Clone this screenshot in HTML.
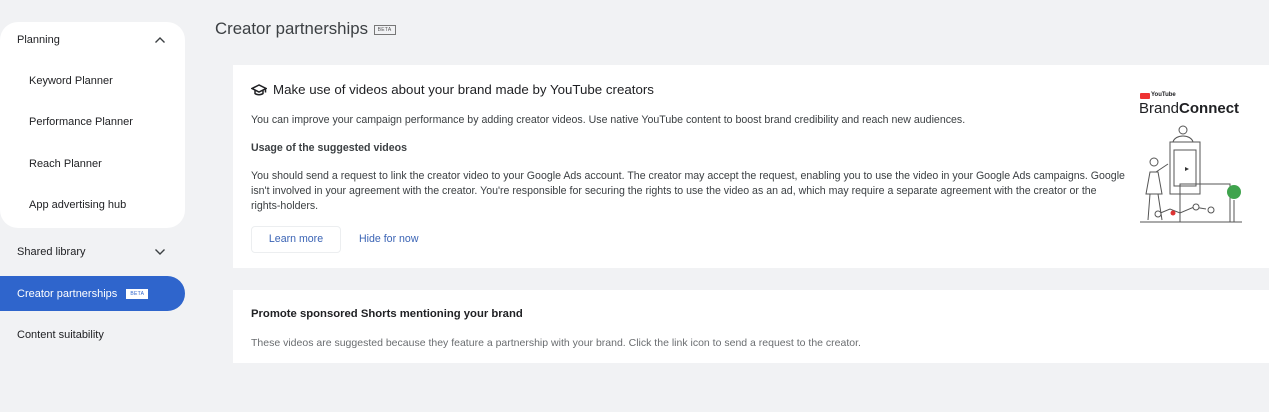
<!DOCTYPE html>
<html><head><style>
*{margin:0;padding:0;box-sizing:border-box}
body{width:1269px;height:412px;background:#f1f2f4;font-family:"Liberation Sans",Arial,sans-serif;color:#202124;position:relative;overflow:hidden}
.abs{position:absolute;white-space:nowrap}
.side{position:absolute;left:0;top:22px;width:185px;height:206px;background:#fff;border-radius:18px}
.nav{font-size:11px;color:#202124}
.beta{display:inline-block;border:1px solid #777;font-size:5px;padding:1px 3px;vertical-align:middle;color:#555;letter-spacing:.3px}
.card{position:absolute;left:233px;right:0;background:#fff}
.p{font-size:10.6px;color:#3c4043}
</style></head><body>
<div class="side"></div>
<div class="abs nav" style="left:17px;top:34px">Planning</div>
<svg class="abs" style="left:154px;top:36px" width="12" height="8" viewBox="0 0 12 8"><path d="M1.5 6.5L6 2l4.5 4.5" fill="none" stroke="#3c4043" stroke-width="1.4"/></svg>
<div class="abs nav" style="left:29px;top:75px">Keyword Planner</div>
<div class="abs nav" style="left:29px;top:116px">Performance Planner</div>
<div class="abs nav" style="left:29px;top:158px">Reach Planner</div>
<div class="abs nav" style="left:29px;top:199px">App advertising hub</div>
<div class="abs nav" style="left:17px;top:246px">Shared library</div>
<svg class="abs" style="left:154px;top:248px" width="12" height="8" viewBox="0 0 12 8"><path d="M1.5 1.5L6 6l4.5-4.5" fill="none" stroke="#3c4043" stroke-width="1.4"/></svg>
<div class="abs" style="left:0;top:276px;width:185px;height:35px;background:#2f65cc;border-radius:0 18px 18px 0"></div>
<div class="abs nav" style="left:17px;top:288px;color:#fff">Creator partnerships <span class="beta" style="border-color:#fff;background:#fff;color:#2f65cc;margin-left:6px">BETA</span></div>
<div class="abs nav" style="left:17px;top:329px">Content suitability</div>

<div class="abs" style="left:215px;top:19px;font-size:16.8px;color:#3c4043">Creator partnerships <span class="beta" style="margin-left:1px">BETA</span></div>

<div class="card" style="top:65px;height:203px"></div>
<svg class="abs" style="left:251px;top:83px" width="16" height="14" viewBox="0 0 16 14"><path d="M8 2L1 5.5 8 9l7-3.5z M4 7v3.5c2 1.6 6 1.6 8 0V7 M14.5 5.5v4" fill="none" stroke="#202124" stroke-width="1.5"/></svg>
<div class="abs" style="left:273px;top:82px;font-size:13.3px">Make use of videos about your brand made by YouTube creators</div>
<div class="abs p" style="left:251px;top:114px">You can improve your campaign performance by adding creator videos. Use native YouTube content to boost brand credibility and reach new audiences.</div>
<div class="abs" style="left:251px;top:142px;font-size:10.6px;font-weight:bold;color:#3c4043">Usage of the suggested videos</div>
<div class="abs p" style="left:251px;top:169px;line-height:15px;white-space:normal;width:876px;hyphens:none">You should send a request to link the creator video to your Google Ads account. The creator may accept the request, enabling you to use the video in your Google Ads campaigns. Google isn't involved in your agreement with the creator. You're responsible for securing the rights to use the video as an ad, which may require a separate agreement with the creator or the <span style="white-space:nowrap">rights&#8209;holders.</span></div>
<div class="abs" style="left:251px;top:226px;width:90px;height:27px;border:1px solid #eceef0;border-radius:4px;font-size:10.6px;color:#3b64b5;text-align:center;line-height:25px">Learn more</div>
<div class="abs" style="left:359px;top:233px;font-size:10.6px;color:#3b64b5">Hide for now</div>

<div class="abs" style="left:1140px;top:93px;width:10px;height:6px;background:#e33;border-radius:1px"></div>
<div class="abs" style="left:1151px;top:92px;font-size:6px;font-weight:bold">YouTube</div>
<div class="abs" style="left:1139px;top:100px;font-size:15px;color:#202124">Brand<b>Connect</b></div>
<svg class="abs" style="left:1138px;top:122px" width="110" height="106" viewBox="0 0 110 106">
<g fill="none" stroke="#555" stroke-width="1">
<rect x="32" y="20" width="30" height="52"/><rect x="36" y="28" width="22" height="36"/>
<circle cx="45" cy="8" r="4"/><path d="M35 20c2-8 18-8 20 0"/>
<path d="M42 100V62h50v38"/><path d="M2 100h102"/>
<circle cx="16" cy="40" r="4"/><path d="M12 50l-4 22h16l-4-22z M12 72l-2 26 M20 72l4 26 M18 50l12-8"/>
<path d="M20 92l12 -5 10 4 14-6 12 2"/>
<circle cx="20" cy="92" r="3" fill="#fff"/><circle cx="58" cy="85" r="3" fill="#fff"/><circle cx="73" cy="88" r="3" fill="#fff"/>
<path d="M96 78v22"/>
</g>
<circle cx="96" cy="70" r="7" fill="#3fa34d"/><circle cx="35" cy="91" r="2.5" fill="#d33"/><path d="M47 45l4 2-4 2z" fill="#333"/>
</svg>

<div class="card" style="top:290px;height:73px"></div>
<div class="abs" style="left:251px;top:308px;font-size:11.3px;font-weight:bold;color:#202124">Promote sponsored Shorts mentioning your brand</div>
<div class="abs p" style="left:251px;top:337px;font-size:10.5px;color:#6a6d70">These videos are suggested because they feature a partnership with your brand. Click the link icon to send a request to the creator.</div>
</body></html>
